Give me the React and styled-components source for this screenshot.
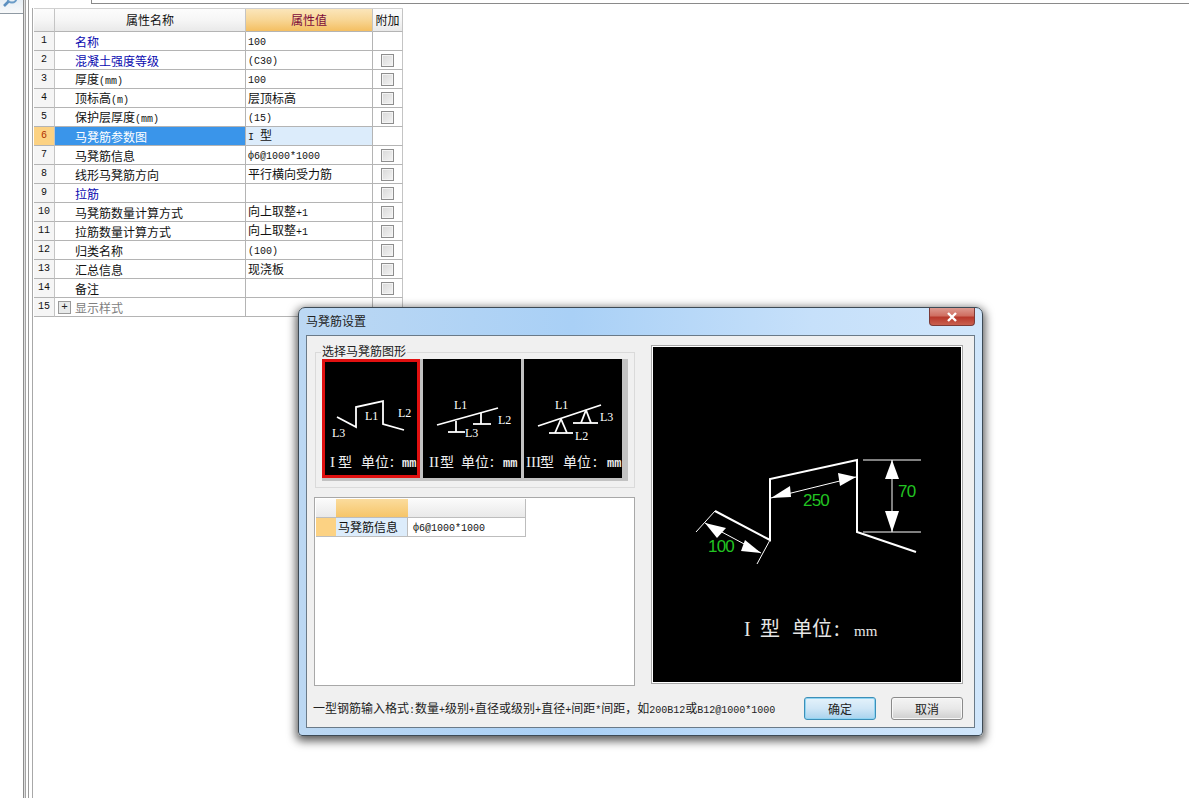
import React from 'react';
import styled, { createGlobalStyle } from 'styled-components';

const Global = createGlobalStyle`
  html, body { margin: 0; padding: 0; background: #fff; }
  body { font: 12px/1 "Noto Sans CJK SC", "Liberation Sans", sans-serif; color: #111; overflow: hidden; }
`;

const Latin = styled.span`
  font-family: "Liberation Mono", monospace;
  font-size: 10px;
`;

function Mixed({ text }) {
  const parts = text.split(/([\x00-\x7fф]+)/).filter(Boolean);
  return parts.map((p, i) => (/^[\x00-\x7fф]+$/.test(p) ? <Latin key={i}>{p}</Latin> : <React.Fragment key={i}>{p}</React.Fragment>));
}

const Page = styled.div`
  position: relative;
  width: 1189px;
  height: 798px;
  display: flex;
  overflow: hidden;
  background: #fff;
`;
const Rail = styled.div`
  width: 23px;
  flex: none;
`;
const SearchTab = styled.div`
  height: 13px;
  border-bottom: 1px solid #8f9aa3;
  background: linear-gradient(#e6eef5, #f8f9fa);
  overflow: hidden;
`;
const Splitter = styled.div`
  width: 3px;
  flex: none;
  background: #dedede;
  border-left: 1px solid #8c8c8c;
  border-right: 1px solid #a4a4a4;
  box-sizing: border-box;
`;
const Main = styled.div`
  flex: 1;
  display: flex;
  flex-direction: column;
  min-width: 0;
  margin-left: 2px;
  border-left: 1px solid #9a9a9a;
`;
const TopStrip = styled.div`
  height: 8px;
  flex: none;
  padding-left: 62px;
`;
const TopField = styled.div`
  height: 3px;
  border-left: 1px solid #8a8a8a;
  border-bottom: 1px solid #8a8a8a;
`;
const Content = styled.div`
  flex: 1;
  margin-left: 3px;
  border-left: 1px solid #a8a8a8;
  padding-left: 1px;
`;
const Table = styled.div`
  width: 369px;
  border-top: 1px solid #d0d0d0;
  display: grid;
  grid-template-columns: 21px 191px 127px 30px;
  grid-auto-rows: 19px;
  grid-template-rows: 23px;
`;
const HeadCell = styled.div`
  display: flex;
  align-items: center;
  justify-content: center;
  font-size: 12px;
  border-right: 1px solid #c4c4c4;
  border-bottom: 1px solid #b4b4b4;
  background: ${p => p.$active ? 'linear-gradient(#fbe6bb, #f8d695 50%, #f4bf62)' : 'linear-gradient(#fcfcfc, #f6f6f6 50%, #e9e9e9)'};
  color: ${p => p.$active ? '#7c0a3a' : '#111'};
`;
const IndexCell = styled.div`
  display: flex;
  align-items: center;
  justify-content: center;
  font-family: "Liberation Mono", monospace;
  font-size: 10px;
  border-right: 1px solid #c4c4c4;
  border-bottom: 1px solid #b4b4b4;
  background: ${p => p.$active ? '#fcd283' : '#f5f5f5'};
  color: ${p => p.$active ? '#b03000' : '#111'};
`;
const NameCell = styled.div`
  display: flex;
  align-items: center;
  gap: 4px;
  padding-left: ${p => p.$tree ? '3px' : '20px'};
  padding-top: 1px;
  border-right: 1px solid #b4b4b4;
  border-bottom: 1px solid #b4b4b4;
  background: ${p => p.$active ? '#3a95ea' : '#fff'};
  color: ${p => p.$active ? '#fff' : p.$tone === 'blue' ? '#0a0ab0' : p.$tone === 'gray' ? '#808080' : '#111'};
`;
const ValueCell = styled.div`
  display: flex;
  align-items: center;
  padding-left: 2px;
  border-right: 1px solid #b4b4b4;
  border-bottom: 1px solid #b4b4b4;
  background: ${p => p.$active ? '#dcecfb' : '#fff'};
`;
const AddCell = styled.div`
  display: flex;
  align-items: center;
  justify-content: center;
  border-right: 1px solid #c4c4c4;
  border-bottom: 1px solid #b4b4b4;
`;
const Check = styled.div`
  width: 11px;
  height: 11px;
  border: 1px solid #8e8e8e;
  box-shadow: inset 0 0 0 1px #f4f4f4;
  background: linear-gradient(135deg, #d8d8d8, #f4f4f4);
`;
const Expand = styled.div`
  width: 11px;
  height: 11px;
  border: 1px solid #9a9a9a;
  background: #e8eaea;
  display: flex;
  align-items: center;
  justify-content: center;
  font: 11px/1 "Liberation Mono", monospace;
  color: #222;
`;

const Dialog = styled.div`
  position: absolute;
  left: 298px;
  top: 307px;
  width: 685px;
  height: 429px;
  box-sizing: border-box;
  padding: 0 7px 7px;
  border-radius: 7px 7px 4px 4px;
  border: 1px solid #3d4a55;
  background: linear-gradient(90deg, #bcd8f3, #a9d0f6 40%, #c6e0fa 75%, #d0e6fb);
  box-shadow: 0 3px 10px 2px rgba(0, 0, 0, .65);
  display: flex;
  flex-direction: column;
`;
const TitleBar = styled.div`
  height: 27px;
  flex: none;
  display: flex;
  justify-content: space-between;
  align-items: flex-start;
`;
const Title = styled.div`
  padding-top: 7px;
  color: #222;
`;
const CloseBtn = styled.div`
  width: 46px;
  height: 18px;
  box-sizing: border-box;
  border: 1px solid #7c3a36;
  border-top: none;
  border-radius: 0 0 4px 4px;
  background: linear-gradient(#dd9a90, #cf6f62 45%, #b8392c 55%, #c9604f);
  display: flex;
  align-items: center;
  justify-content: center;
`;
const Client = styled.div`
  flex: 1;
  border: 1px solid #6a7a88;
  background: #f0f0f0;
  padding: 9px 11px 0 7px;
  display: flex;
  flex-direction: column;
`;
const Columns = styled.div`
  display: flex;
  gap: 16px;
`;
const LeftCol = styled.div`
  width: 321px;
  padding-top: 7px;
`;
const Group = styled.div`
  position: relative;
  height: 136px;
  box-sizing: border-box;
  margin-left: 1px;
  border: 1px solid #dadada;
  padding: 6px 6px 0;
`;
const Legend = styled.div`
  position: absolute;
  left: 5px;
  top: -8px;
  padding: 0 1px;
  background: #f0f0f0;
  color: #222;
`;
const Strip = styled.div`
  display: flex;
  gap: 3px;
  height: 122px;
  box-sizing: border-box;
  padding-right: 6px;
  background: #c2c2c2;
`;
const Thumb = styled.div`
  width: ${p => p.$w}px;
  height: 119px;
  box-sizing: border-box;
  flex: none;
  background: #000;
  border: ${p => p.$selected ? '3px solid #e01010' : 'none'};
  svg { display: block; width: 100%; height: 100%; }
`;
const ListBox = styled.div`
  margin-top: 9px;
  height: 189px;
  box-sizing: border-box;
  background: #fff;
  border: 1px solid #a8a8a8;
  padding: 1px;
`;
const MiniTable = styled.div`
  display: grid;
  width: 210px;
  grid-template-columns: 20px 72px 118px;
  grid-template-rows: 19px 19px;
`;
const MiniHead = styled.div`
  box-sizing: border-box;
  border-bottom: 1px solid #bdbdbd;
  border-right: ${p => p.$end ? '1px solid #bdbdbd' : 'none'};
  background: ${p => p.$active ? 'linear-gradient(#fbdc9d, #f6c569)' : 'linear-gradient(#fbfbfb, #e9e9e9)'};
`;
const MiniIndex = styled.div`
  background: #fcd283;
  border-bottom: 1px solid #bdbdbd;
`;
const MiniName = styled.div`
  display: flex;
  align-items: center;
  padding-left: 2px;
  background: #dcecfb;
  border-bottom: 1px solid #bdbdbd;
  border-right: 1px solid #bdbdbd;
`;
const MiniValue = styled.div`
  display: flex;
  align-items: center;
  padding-left: 5px;
  border-bottom: 1px solid #bdbdbd;
  border-right: 1px solid #bdbdbd;
`;
const Preview = styled.div`
  width: 312px;
  height: 339px;
  box-sizing: border-box;
  background: #000;
  border: 1px solid #a8a8a8;
  box-shadow: inset 0 0 0 1px #fff;
  svg { display: block; width: 100%; height: 100%; }
`;
const Footer = styled.div`
  margin-top: 11px;
  display: flex;
  align-items: center;
  justify-content: space-between;
`;
const Hint = styled.div`
  white-space: nowrap;
  margin-left: -1px;
  color: #222;
`;
const Buttons = styled.div`
  display: flex;
  gap: 15px;
`;
const Button = styled.div`
  width: 72px;
  height: 23px;
  box-sizing: border-box;
  border-radius: 3px;
  display: flex;
  align-items: center;
  justify-content: center;
  color: #222;
  border: 1px solid ${p => p.$primary ? '#3c8fb8' : '#8a8a8a'};
  background: ${p => p.$primary ? 'linear-gradient(#e4f2fb, #cfe6f6 50%, #a8d3ee)' : 'linear-gradient(#f4f4f4, #e8e8e8 50%, #cfcfcf)'};
  box-shadow: inset 0 0 0 1px ${p => p.$primary ? '#8fd4f2' : '#f8f8f8'};
`;

const rows = [
  { name: '名称', tone: 'blue', value: '100', check: false },
  { name: '混凝土强度等级', tone: 'blue', value: '(C30)', check: true },
  { name: '厚度(mm)', value: '100', check: true },
  { name: '顶标高(m)', value: '层顶标高', check: true },
  { name: '保护层厚度(mm)', value: '(15)', check: true },
  { name: '马凳筋参数图', value: 'I 型', check: false, active: true },
  { name: '马凳筋信息', value: 'ф6@1000*1000', check: true },
  { name: '线形马凳筋方向', value: '平行横向受力筋', check: true },
  { name: '拉筋', tone: 'blue', value: '', check: true },
  { name: '马凳筋数量计算方式', value: '向上取整+1', check: true },
  { name: '拉筋数量计算方式', value: '向上取整+1', check: true },
  { name: '归类名称', value: '(100)', check: true },
  { name: '汇总信息', value: '现浇板', check: true },
  { name: '备注', value: '', check: true },
  { name: '显示样式', tone: 'gray', value: '', check: false, tree: true },
];

const thumbs = [
  {
    w: 98, x: 322, selected: true,
    caption: { roman: 'I', romanX: 330, xing: 338, unit: 361, colon: 390, mm: 402 },
    lines: ['337,417 356,427 356,407 383,401 383,424 404,430'],
    labels: [['L1', 365, 420], ['L2', 398, 417], ['L3', 332, 437]],
  },
  {
    w: 98, x: 423,
    caption: { roman: 'II', romanX: 429, xing: 440, unit: 461, colon: 490, mm: 503 },
    lines: ['437,425 498,408', '456,421 456,432', '448,432 465,432', '481,413 481,424', '473,424 491,424'],
    labels: [['L1', 454, 409], ['L2', 498, 424], ['L3', 465, 437]],
  },
  {
    w: 98, x: 524,
    caption: { roman: 'III', romanX: 526, xing: 540, unit: 563, colon: 593, mm: 607 },
    lines: ['538,426 601,405', '561,419 555,433', '561,419 567,433', '549,433 573,433', '586,410 581,423', '586,410 591,423', '573,423 598,423'],
    labels: [['L1', 555, 409], ['L3', 600, 421], ['L2', 575, 440]],
  },
];

const SearchIcon = () => (
  <svg width="20" height="13" viewBox="0 0 20 13" style={{ display: 'block' }}>
    <circle cx="12" cy="-2" r="4.5" fill="none" stroke="#6a9cc8" strokeWidth="2" />
    <path d="M8.5 1.5 L4 6" stroke="#5b8fc0" strokeWidth="2.6" />
  </svg>
);

const CJK = '"Noto Sans CJK SC", sans-serif';
const SERIF = '"Liberation Serif", serif';
const MONO = '"Liberation Mono", monospace';

function Caption({ c, y = 467 }) {
  return (
    <g fill="#eee" fontSize="14">
      <text x={c.romanX} y={y} fontFamily={SERIF} fontSize="15">{c.roman}</text>
      <text x={c.xing} y={y} fontFamily={CJK}>型</text>
      <text x={c.unit} y={y} fontFamily={CJK}>单位</text>
      <text x={c.colon} y={y} fontFamily={CJK}>:</text>
      <text x={c.mm} y={y} fontFamily={MONO} fontSize="12" fontWeight="700">mm</text>
    </g>
  );
}

function ThumbArt({ t }) {
  const b = t.selected ? 3 : 0;
  return (
    <svg viewBox={`${t.x + b} ${359 + b} ${t.w - b * 2} ${119 - b * 2}`}>
      {t.lines.map((l, i) => <polyline key={i} points={l} fill="none" stroke="#fff" strokeWidth="1.8" />)}
      {t.labels.map(([s, x, y]) => <text key={s} x={x} y={y} fill="#fff" fontSize="12" fontFamily={SERIF}>{s}</text>)}
      <Caption c={t.caption} />
    </svg>
  );
}

export default function App() {
  return (
    <Page>
      <Global />
      <Rail><SearchTab><SearchIcon /></SearchTab></Rail>
      <Splitter />
      <Main>
        <TopStrip><TopField /></TopStrip>
        <Content>
          <Table>
            <HeadCell />
            <HeadCell>属性名称</HeadCell>
            <HeadCell $active>属性值</HeadCell>
            <HeadCell>附加</HeadCell>
            {rows.map((r, i) => (
              <React.Fragment key={i}>
                <IndexCell $active={r.active}>{i + 1}</IndexCell>
                <NameCell $active={r.active} $tone={r.tone} $tree={r.tree}>
                  {r.tree && <Expand>+</Expand>}
                  <span><Mixed text={r.name} /></span>
                </NameCell>
                <ValueCell $active={r.active}><span><Mixed text={r.value} /></span></ValueCell>
                <AddCell>{r.check && <Check />}</AddCell>
              </React.Fragment>
            ))}
          </Table>
        </Content>
      </Main>

      <Dialog>
        <TitleBar>
          <Title>马凳筋设置</Title>
          <CloseBtn>
            <svg width="12" height="10" viewBox="0 0 12 10"><path d="M2 1 L10 9 M10 1 L2 9" stroke="#fff" strokeWidth="2.4" /></svg>
          </CloseBtn>
        </TitleBar>
        <Client>
          <Columns>
            <LeftCol>
              <Group>
                <Legend>选择马凳筋图形</Legend>
                <Strip>
                  {thumbs.map(t => (
                    <Thumb key={t.x} $w={t.w} $selected={t.selected}><ThumbArt t={t} /></Thumb>
                  ))}
                </Strip>
              </Group>
              <ListBox>
                <MiniTable>
                  <MiniHead />
                  <MiniHead $active />
                  <MiniHead $end />
                  <MiniIndex />
                  <MiniName>马凳筋信息</MiniName>
                  <MiniValue><span><Mixed text="ф6@1000*1000" /></span></MiniValue>
                </MiniTable>
              </ListBox>
            </LeftCol>
            <Preview>
              <svg viewBox="652 347 310 337">
                <polyline points="715,512 770,541 770,480 857,461 857,533 916,553" fill="none" stroke="#fff" strokeWidth="2" />
                <g stroke="#fff" strokeWidth="1" fill="none">
                  <line x1="715" y1="512" x2="696" y2="533" />
                  <line x1="770" y1="541" x2="757" y2="565" />
                  <line x1="705" y1="524" x2="761" y2="554" />
                  <line x1="771" y1="499" x2="856" y2="478" />
                  <line x1="863" y1="461" x2="921" y2="461" />
                  <line x1="863" y1="533" x2="921" y2="533" />
                  <line x1="892" y1="461" x2="892" y2="533" />
                </g>
                <g fill="#fff">
                  <polygon points="705,524 726,529 717,539" />
                  <polygon points="761,554 745,541 741,552" />
                  <polygon points="771,499 790,487 791,498" />
                  <polygon points="856,478 838,474 840,487" />
                  <polygon points="892,461 885,480 899,480" />
                  <polygon points="892,533 885,512 899,512" />
                </g>
                <g fill="#22c422" fontSize="17" letterSpacing="-0.8" fontFamily='"Liberation Sans", sans-serif'>
                  <text x="708" y="553">100</text>
                  <text x="803" y="507">250</text>
                  <text x="898" y="498">70</text>
                </g>
                <g fill="#e6e6e6" fontSize="20">
                  <text x="744" y="637" fontFamily={SERIF}>I</text>
                  <text x="760" y="637" fontFamily={CJK}>型</text>
                  <text x="792" y="637" fontFamily={CJK}>单位</text>
                  <text x="834" y="637" fontFamily={CJK}>:</text>
                  <text x="854" y="637" fontFamily={SERIF} fontSize="15">mm</text>
                </g>
              </svg>
            </Preview>
          </Columns>
          <Footer>
            <Hint><Mixed text="一型钢筋输入格式:数量+级别+直径或级别+直径+间距*间距，如200B12或B12@1000*1000" /></Hint>
            <Buttons>
              <Button $primary>确定</Button>
              <Button>取消</Button>
            </Buttons>
          </Footer>
        </Client>
      </Dialog>
    </Page>
  );
}
